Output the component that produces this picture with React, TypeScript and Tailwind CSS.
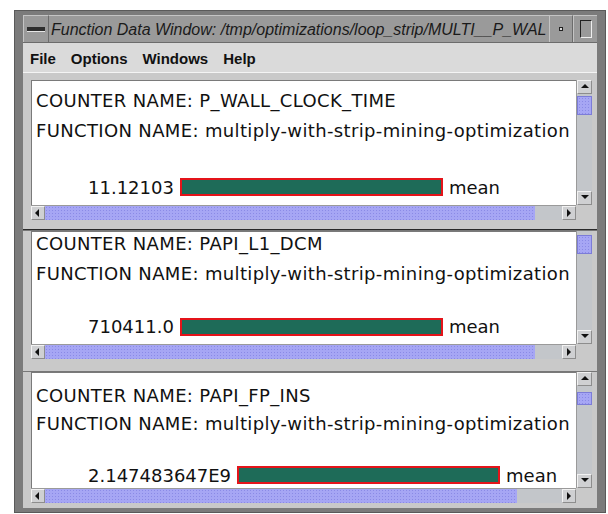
import React from 'react';

const dots = "bg-[radial-gradient(#8a8ae6_1px,transparent_1px)] bg-[length:3px_3px]";

const Arrow: React.FC<{ dir: 'up' | 'down' | 'left' | 'right' }> = ({ dir }) => {
  const pts = {
    up: '1,6 5,2 9,6',
    down: '1,2 5,6 9,2',
    left: '6,1 2,5 6,9',
    right: '3,1 7,5 3,9',
  }[dir];
  return (
    <svg width="10" height="10" viewBox="0 0 10 10">
      <polygon points={pts} fill="#111" />
    </svg>
  );
};

const ArrowBox: React.FC<{ dir: 'up' | 'down' | 'left' | 'right'; className?: string }> = ({ dir, className }) => (
  <div className={`flex items-center justify-center bg-[#cfd0d2] border-t border-l border-[#f2f2f2] border-r border-b border-r-[#8d8d8d] border-b-[#8d8d8d] ${className ?? ''}`}>
    <Arrow dir={dir} />
  </div>
);

const VScroll: React.FC<{ showUp: boolean; thumbTop: number; thumbH: number }> = ({ showUp, thumbTop, thumbH }) => (
  <div className="w-[16px] flex flex-col bg-[#c3c6ca] border-l border-[#9a9a9a]">
    {showUp && <ArrowBox dir="up" className="h-[14px] shrink-0" />}
    <div className="shrink-0" style={{ height: thumbTop }} />
    <div className={`shrink-0 bg-[#a6a6f4] ${dots} border border-[#7c7cd8]`} style={{ height: thumbH }} />
    <div className="flex-1" />
    <ArrowBox dir="down" className="h-[14px] shrink-0" />
  </div>
);

const HScroll: React.FC<{ thumbW: number }> = ({ thumbW }) => (
  <div className="flex h-[15px]">
    <div className="w-[547px] flex bg-[#c3c6ca] border-t border-[#9a9a9a]">
      <ArrowBox dir="left" className="w-[14px] shrink-0" />
      <div className={`shrink-0 bg-[#a6a6f4] ${dots}`} style={{ width: thumbW }} />
      <div className="flex-1" />
      <ArrowBox dir="right" className="w-[14px] shrink-0" />
    </div>
    <div className="w-[16px] bg-[#c9c9c9]" />
  </div>
);

type PaneProps = {
  counter: string;
  value: string;
  padTop: string;
  gap1: string;
  gap2: string;
  bodyH: string;
  paneCls: string;
  showUp: boolean;
  thumbTop: number;
  thumbH: number;
  hThumb: number;
};

const Pane: React.FC<PaneProps> = (p) => (
  <div className={`flex flex-col pl-[8px] pr-[5px] bg-[#c9c9c9] ${p.paneCls}`}>
    <div className={`flex ${p.bodyH}`}>
      <div className="w-[547px] bg-white overflow-hidden border-l border-t border-[#7a7a7a] font-['DejaVu_Sans',sans-serif] text-[18px] tracking-[0.35px] text-[#111]">
        <div className={p.padTop}>
          <div className="h-[30px] leading-[30px] pl-[4px] whitespace-nowrap">COUNTER NAME: {p.counter}</div>
          <div className={`h-[30px] leading-[30px] pl-[4px] whitespace-nowrap ${p.gap1}`}>FUNCTION NAME: multiply-with-strip-mining-optimization</div>
          <div className={`h-[30px] flex items-center pl-[56px] gap-[6px] whitespace-nowrap ${p.gap2}`}>
            <span className="tracking-normal">{p.value}</span>
            <div className="w-[263px] h-[18px] bg-[#1e6b58] border-2 border-[#e4141a]" />
            <span className="tracking-normal">mean</span>
          </div>
        </div>
      </div>
      <VScroll showUp={p.showUp} thumbTop={p.thumbTop} thumbH={p.thumbH} />
    </div>
    <HScroll thumbW={p.hThumb} />
  </div>
);

const Sash = () => (
  <div className="h-[3px] bg-[#2a2a2a] border-b border-[#777]" />
);

export default function App() {
  return (
    <div className="w-[608px] h-[514px] bg-white overflow-hidden">
      <div className="ml-[14px] mt-[10px] w-[592px] h-[503px] pt-[4px] px-[8px] pb-[4px] bg-[#a9a9a9] bg-[radial-gradient(#7b7b7b_1px,transparent_1px)] bg-[length:2px_2px] border border-[#5a5a5a]">
        <div className="flex flex-col h-full bg-[#c9c9c9]">
          {/* title bar */}
          <div className="h-[28px] shrink-0 flex items-stretch bg-[#9a9a9a] border-b border-[#6c6c6c]">
            <div className="w-[26px] shrink-0 flex items-center justify-center border-r border-[#6c6c6c] border-l border-t border-l-[#c4c4c4] border-t-[#c4c4c4]">
              <div className="w-[18px] h-[5px] bg-[#2e2e2e] border-b border-[#e6e6e6]" />
            </div>
            <div className="flex-1 min-w-0 overflow-hidden whitespace-nowrap pl-[2px] leading-[27px] italic text-[16px] font-['Liberation_Sans',Arial,sans-serif] text-[#1a1a1a] border-t border-[#c4c4c4]">
              Function Data Window: /tmp/optimizations/loop_strip/MULTI__P_WAL
            </div>
            <div className="w-[24px] shrink-0 flex items-center justify-center border-l border-t border-l-[#c4c4c4] border-t-[#c4c4c4] border-r border-[#6c6c6c]">
              <div className="w-[4px] h-[4px] border border-[#222] bg-[#d8d8d8]" />
            </div>
            <div className="w-[24px] shrink-0 flex items-center justify-center border-l border-t border-l-[#c4c4c4] border-t-[#c4c4c4]">
              <div className="w-[12px] h-[18px] border border-[#222] border-r-[#eee] border-b-[#eee]" />
            </div>
          </div>
          {/* menu bar */}
          <div className="h-[30px] shrink-0 flex items-center gap-[15px] pl-[7px] pt-[3px] bg-[#dadada] border-b border-[#f4f4f4] font-['Liberation_Sans',Arial,sans-serif] font-bold text-[15px] text-[#111]">
            <span>File</span>
            <span>Options</span>
            <span>Windows</span>
            <span>Help</span>
          </div>
          <Pane
            counter="P_WALL_CLOCK_TIME"
            value="11.12103"
            padTop="pt-[5px]"
            gap1=""
            gap2="mt-[26px]"
            bodyH="h-[125px]"
            paneCls="pt-[7px] pb-[9px]"
            showUp
            thumbTop={2}
            thumbH={19}
            hThumb={490}
          />
          <Sash />
          <Pane
            counter="PAPI_L1_DCM"
            value="710411.0"
            padTop="-mt-[3px]"
            gap1=""
            gap2="mt-[23px]"
            bodyH="h-[113px]"
            paneCls="pt-[0px] pb-[12px]"
            showUp={false}
            thumbTop={4}
            thumbH={19}
            hThumb={490}
          />
          <Sash />
          <Pane
            counter="PAPI_FP_INS"
            value="2.147483647E9"
            padTop="pt-[8px]"
            gap1="-mt-[2px]"
            gap2="mt-[21px]"
            bodyH="h-[116px]"
            paneCls="pt-[0px] pb-[5px]"
            showUp
            thumbTop={6}
            thumbH={13}
            hThumb={472}
          />
        </div>
      </div>
    </div>
  );
}
